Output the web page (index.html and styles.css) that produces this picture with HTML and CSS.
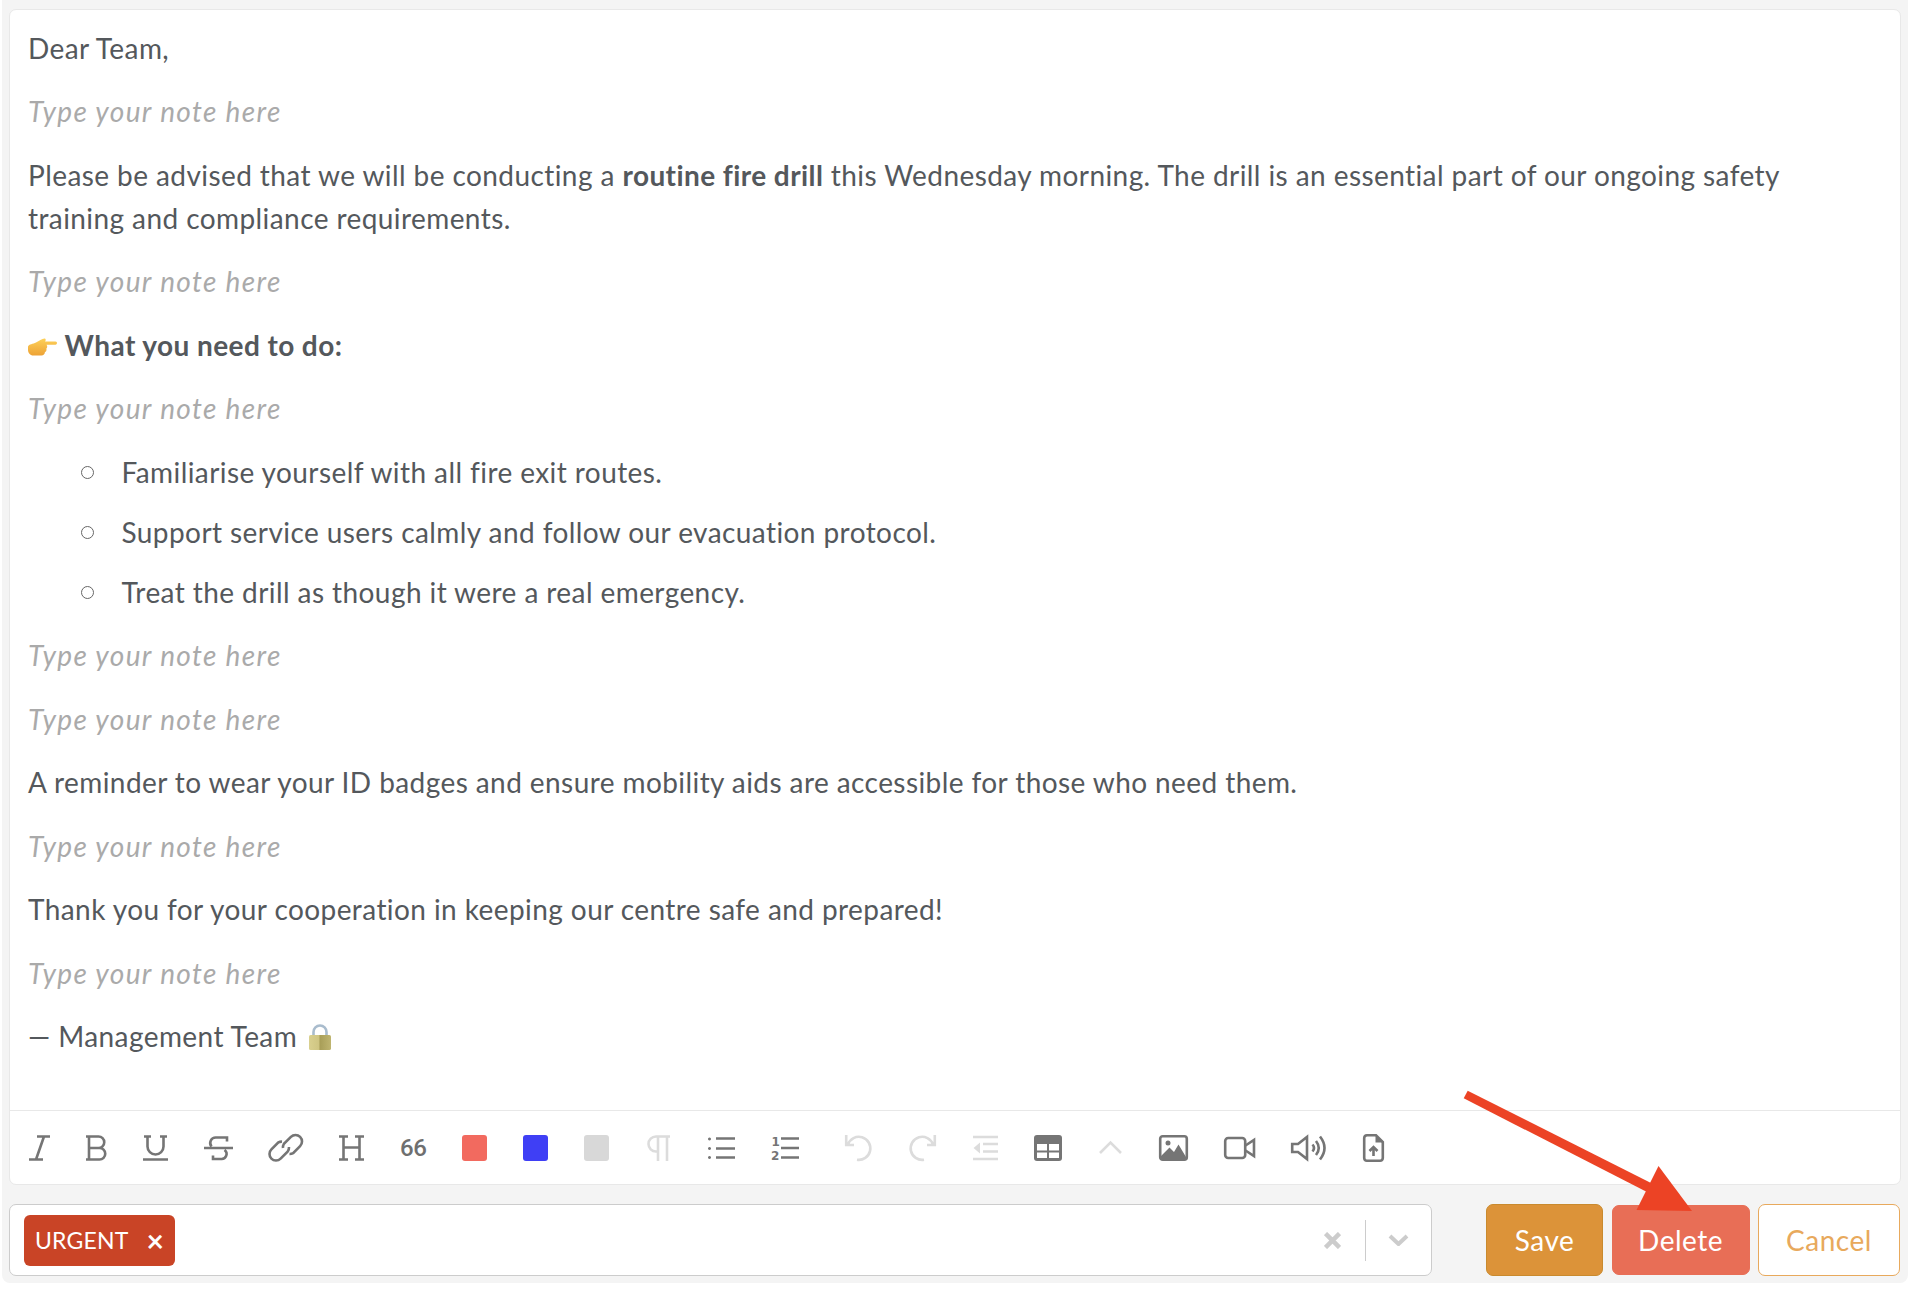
FILE: index.html
```html
<!DOCTYPE html>
<html lang="en">
<head>
<meta charset="utf-8">
<title>Note editor</title>
<link rel="stylesheet" href="styles.css">
</head>
<body>
<main class="panel">
  <section class="card">
    <article class="editor">
      <p>Dear Team,</p>
      <p class="ph">Type your note here</p>
      <p>Please be advised that we will be conducting a <strong>routine fire drill</strong> this Wednesday morning. The drill is an essential part of our ongoing safety training and compliance requirements.</p>
      <p class="ph">Type your note here</p>
      <p><svg class="emoji-hand" width="29" height="18" viewBox="0 0 29 18"><defs><linearGradient id="h" x1="0" y1="0" x2="0" y2="1"><stop offset="0" stop-color="#fdd15a"/><stop offset="1" stop-color="#eda235"/></linearGradient></defs><path fill="url(#h)" d="M0 8.500C1 6 5 6 8 4.500 11 3 14 .5 16.500 .5c1.500 0 1.500 2 .5 3h10.500c2 0 2 3.200 0 3.200H18.500c1 1.500 1 3-.2 4 .6 1.500-.2 3-1.400 3.500 0 1.800-1.500 3-3.500 3.300H6C2.500 18 0 15 0 12Z"/></svg> <strong>What you need to do:</strong></p>
      <p class="ph">Type your note here</p>
      <ul class="bullets">
        <li>Familiarise yourself with all fire exit routes.</li>
        <li>Support service users calmly and follow our evacuation protocol.</li>
        <li>Treat the drill as though it were a real emergency.</li>
      </ul>
      <p class="ph">Type your note here</p>
      <p class="ph">Type your note here</p>
      <p>A reminder to wear your ID badges and ensure mobility aids are accessible for those who need them.</p>
      <p class="ph">Type your note here</p>
      <p>Thank you for your cooperation in keeping our centre safe and prepared!</p>
      <p class="ph">Type your note here</p>
      <p>— Management Team <svg class="emoji-lock" width="22" height="26" viewBox="0 0 22 26"><defs><linearGradient id="l" x1="0" y1="0" x2="1" y2="0"><stop offset="0" stop-color="#d9d08f"/><stop offset=".45" stop-color="#cfc582"/><stop offset=".5" stop-color="#a89e58"/><stop offset="1" stop-color="#bfb570"/></linearGradient></defs><path d="M4.500 12V8a6.500 6.500 0 0 1 13 0v4" fill="none" stroke="#a9bccd" stroke-width="2.600"/><rect y="11" width="22" height="15" rx="1.600" fill="url(#l)"/></svg></p>
    </article>
    <nav class="toolbar">
      <svg class="ico" width="21" height="26" viewBox="0 0 21 26"><path d="M8 1.500H21M0 24.500H14M15 1.500 7 24.500"/></svg>
      <svg class="ico" width="21" height="26" viewBox="0 0 21 26"><path d="M0 1.500H12.500a5.500 5.500 0 0 1 0 11.500H3M3 1.500V24.500M0 24.500H13.500a5.750 5.750 0 0 0 0-11.500"/></svg>
      <svg class="ico" width="25" height="26" viewBox="0 0 25 26"><path d="M1 1.500H8M4.500 1.500V11.500a8 8 0 0 0 16 0V1.500M17 1.500H24M0 24.500H25"/></svg>
      <svg class="ico" width="29" height="26" viewBox="0 0 29 26"><path d="M0 13H29M23 6.500V2.500H12a5.500 5.500 0 0 0-4.500 9M20.500 15a5 5 0 0 1-3.500 9H9V20.500"/></svg>
      <svg class="ico" width="34" height="26" viewBox="0 0 34 26"><path d="M13 6.700A6.500 6.500 0 0 0 9.400 7.400L2.400 14.400A6.500 6.500 0 0 0 11.600 23.600L18.600 16.600A6.500 6.500 0 0 0 20 12"/><path d="M20.500 19A6.500 6.500 0 0 0 24.100 18.100L31.100 11.100A6.500 6.500 0 0 0 21.900 1.900L14.900 8.900A6.500 6.500 0 0 0 14 13"/></svg>
      <svg class="ico" width="25" height="26" viewBox="0 0 25 26"><path d="M0 1.500H9M4.500 1.500V24.500M0 24.500H9M16 1.500H25M20.500 1.500V24.500M16 24.500H25M4.500 12.500H20.500"/></svg>
      <span class="quote">66</span>
      <span class="swatch swatch-red"></span>
      <span class="swatch swatch-blue"></span>
      <span class="swatch swatch-gray"></span>
      <svg class="ico off" width="27" height="26" viewBox="0 0 27 26"><path d="M25 1.500H11a7.500 7.500 0 0 0 0 15H13M13 1.500V26M22 1.500V26"/></svg>
      <svg class="ico" width="27" height="26" viewBox="0 0 27 26"><path d="M8 3.500H27M8 13.500H27M8 22.500H27"/><path class="dots" d="M1.500 2.500a1.500 1.500 0 1 0 .01 0M1.500 12a1.500 1.500 0 1 0 .01 0M1.500 21a1.500 1.500 0 1 0 .01 0"/></svg>
      <svg class="ico" width="28" height="26" viewBox="0 0 28 26"><path d="M10 3.500H28M10 13H28M10 22.500H28"/><text class="num" x=".5" y="10.500">1</text><text class="num" x="0" y="24.500">2</text></svg>
      <svg class="ico off tool-gap" width="26" height="26" viewBox="0 0 26 26"><path d="M1.200 0V10H9M3 9.500A11.500 11.500 0 1 1 12 24.700"/></svg>
      <svg class="ico off" width="29" height="26" viewBox="0 0 29 26"><path d="M27.800 0V10H20M26 9.500A11.500 11.500 0 1 0 17 24.700"/></svg>
      <svg class="ico off" width="26" height="26" viewBox="0 0 26 26"><path d="M1 2H26M11 9H26M11 16.500H26M1 24H26"/><path class="dots" d="M8 7.500V18.500L1.500 13Z"/></svg>
      <svg class="ico" width="28" height="26" viewBox="0 0 28 26"><rect class="dots" width="28" height="26" rx="3"/><path class="cells" d="M3 9H13V15.500H3ZM15 9H25V15.500H15ZM3 17.500H13V23H3ZM15 17.500H25V23H15Z"/></svg>
      <svg class="ico off" width="25" height="26" viewBox="0 0 25 26"><path d="M2 18 12.500 7.500 23 18"/></svg>
      <svg class="ico" width="29" height="26" viewBox="0 0 29 26"><rect x="1.200" y="1.200" width="26.600" height="23.600" rx="2.500"/><circle class="dots" cx="9" cy="8" r="2.500"/><path class="dots" d="M2 24V21L10.500 12.500 15 17 19.500 9.500 27 22V24Z"/></svg>
      <svg class="ico" width="31" height="26" viewBox="0 0 31 26"><rect x="1.200" y="3" width="20" height="20" rx="3"/><path d="M21.500 10.500 30 5V21L21.500 15.500"/></svg>
      <svg class="ico" width="36" height="26" viewBox="0 0 36 26"><path d="M1.200 9H7L16 2V24L7 17H1.200Z"/><path d="M21.500 9.500Q24.500 13 21.500 16.500M25 6Q30.500 13 25 20M29 1.500Q38 13 29 24.500"/></svg>
      <svg class="ico file" width="21" height="28" viewBox="0 0 21 28"><path d="M13 1.200H4A3 3 0 0 0 1.200 4V24A3 3 0 0 0 4 26.800H17A3 3 0 0 0 19.800 24V8Z"/><path class="dots" d="M12.500 1.500V8.500H19.500Z"/><path d="M10.500 22V13.500M6.500 17 10.500 13 14.500 17"/></svg>
    </nav>
  </section>
  <div class="actions">
    <div class="select">
      <span class="tag">URGENT<span class="tag-x">×</span></span>
      <svg class="clear" width="17" height="17" viewBox="0 0 17 17"><path d="M1.500 1.500 15.500 15.500M15.500 1.500 1.500 15.500"/></svg>
      <span class="sep"></span>
      <svg class="chev" width="21" height="12" viewBox="0 0 21 12"><path d="M2 2 10.500 10 19 2"/></svg>
    </div>
    <div class="buttons">
      <button class="btn btn-save">Save</button>
      <button class="btn btn-delete">Delete</button>
      <button class="btn btn-cancel">Cancel</button>
    </div>
  </div>
</main>
<svg class="arrow" width="1926" height="1304" viewBox="0 0 1926 1304"><polygon points="1467.700,1090.700 1463.700,1098.300 1646.500,1191.700 1651,1183"/><polygon points="1658.500,1166 1636.500,1210 1692,1211"/></svg>
</body>
</html>
```
FILE: styles.css
```css
* { box-sizing: border-box; }
html, body { margin: 0; padding: 0; background: #fff; }
body {
  width: 1926px;
  height: 1304px;
  overflow: hidden;
  position: relative;
  font-family: "Lato", "Open Sans", sans-serif;
  color: #54585c;
}
.panel {
  margin-left: 2px;
  width: 1906px;
  height: 1283px;
  padding: 9px 7px 7px 7px;
  background: #f4f4f4;
  border-radius: 0 0 8px 8px;
  display: flex;
  flex-direction: column;
  gap: 19px;
}
.card {
  flex: 1;
  min-height: 0;
  background: #fff;
  border: 1px solid #e8e8e8;
  border-radius: 7px;
  display: flex;
  flex-direction: column;
}
.editor {
  flex: 1;
  min-height: 0;
  padding: 16.5px 60px 0 18px;
  font-size: 28px;
  line-height: 43px;
  letter-spacing: 0.42px;
}
.editor p { margin: 0 0 20.5px; }
.editor strong { font-weight: 700; }
.ph { color: #aaa; font-style: italic; letter-spacing: 1.35px; }
.emoji-hand { vertical-align: 0; }
.emoji-lock { vertical-align: -3px; margin-left: 4px; }
.bullets { list-style: none; margin: 0 0 20.5px; padding: 0 0 0 93.5px; }
.bullets li { position: relative; margin-bottom: 17px; }
.bullets li:last-child { margin-bottom: 0; }
.bullets li::before {
  content: "";
  position: absolute;
  left: -41px;
  top: 15px;
  width: 11px;
  height: 11px;
  border: 1.2px solid #666;
  border-radius: 50%;
}
.toolbar {
  height: 74px;
  flex: none;
  border-top: 1px solid #e8e8e8;
  padding-left: 19px;
  display: flex;
  align-items: center;
  gap: 36px;
}
.ico { flex: none; fill: none; stroke: #757575; stroke-width: 2.6px; overflow: visible; }
.ico.off { stroke: #dcdcdc; }
.ico .dots { fill: #757575; stroke: none; }
.ico.off .dots { fill: #dcdcdc; }
.ico .cells { fill: #fff; stroke: none; }
.ico .num { font: 700 12px "DejaVu Sans", sans-serif; fill: #757575; stroke: none; }
.tool-gap { margin-left: 10px; }
.quote {
  width: 26px;
  font: 500 24px/26px "Roboto", sans-serif;
  color: #6f6f6f;
  letter-spacing: -0.5px;
}
.swatch { width: 25px; height: 26px; border-radius: 3px; flex: none; }
.swatch-red { background: #f26a5f; }
.swatch-blue { background: #3f3ff5; }
.swatch-gray { background: #d8d8d8; }
.actions { display: flex; justify-content: space-between; height: 72px; flex: none; margin-right: 1px; }
.select {
  width: 1423px;
  background: #fff;
  border: 1px solid #ccc;
  border-radius: 7px;
  display: flex;
  align-items: center;
  padding-left: 14px;
}
.tag {
  height: 51px;
  width: 151px;
  background: #c94426;
  border-radius: 6px;
  color: #fff;
  font-size: 23px;
  letter-spacing: 0.2px;
  display: flex;
  align-items: center;
  padding-left: 11px;
}
.tag-x { margin-left: 18px; font-size: 30px; font-weight: 700; line-height: 1; }
.clear { margin-left: auto; fill: none; stroke: #ccc; stroke-width: 4.5px; }
.sep { width: 1.5px; height: 41px; background: #ccc; margin: 0 22px 0 24px; }
.chev { margin-right: 22px; fill: none; stroke: #ccc; stroke-width: 4px; }
.buttons { display: flex; gap: 8.5px; align-items: center; }
.btn {
  font: inherit;
  font-size: 28px;
  border-radius: 7px;
  padding: 0;
  height: 72px;
  letter-spacing: 0.5px;
}
.btn-save { width: 117px; background: #dc9339; border: 1px solid #c98a2e; color: #fff; }
.btn-delete { width: 138px; height: 70px; background: #e86e56; border: 1px solid #e86e56; color: #fff; }
.btn-cancel { width: 142px; background: #fff; border: 1px solid #e8a95c; color: #e8a95c; }
.arrow { position: absolute; left: 0; top: 0; pointer-events: none; fill: #ec4325; }
```
